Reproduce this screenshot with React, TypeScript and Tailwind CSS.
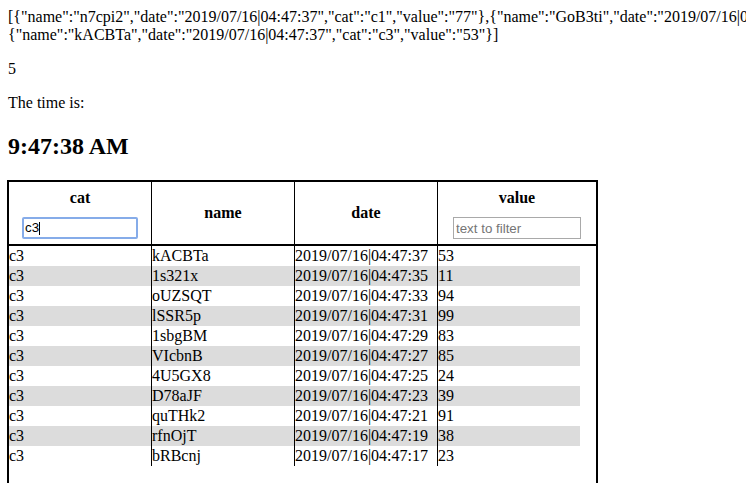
import React from "react";

type Row = {
  name: string;
  date: string;
  value: string;
};

const rows: Array<Row> = [
  { name: "kACBTa", date: "2019/07/16|04:47:37", value: "53" },
  { name: "1s321x", date: "2019/07/16|04:47:35", value: "11" },
  { name: "oUZSQT", date: "2019/07/16|04:47:33", value: "94" },
  { name: "lSSR5p", date: "2019/07/16|04:47:31", value: "99" },
  { name: "1sbgBM", date: "2019/07/16|04:47:29", value: "83" },
  { name: "VIcbnB", date: "2019/07/16|04:47:27", value: "85" },
  { name: "4U5GX8", date: "2019/07/16|04:47:25", value: "24" },
  { name: "D78aJF", date: "2019/07/16|04:47:23", value: "39" },
  { name: "quTHk2", date: "2019/07/16|04:47:21", value: "91" },
  { name: "rfnOjT", date: "2019/07/16|04:47:19", value: "38" },
  { name: "bRBcnj", date: "2019/07/16|04:47:17", value: "23" },
];

const App: React.FC = () => {
  return (
    <div className="h-[483px] w-[746px] overflow-hidden bg-white px-[8px] pt-[8px] font-['Liberation_Serif','Times_New_Roman',serif] text-[16px] leading-[18px] text-black">
      {/* raw data dump */}
      <div className="whitespace-nowrap">
        {'[{"name":"n7cpi2","date":"2019/07/16|04:47:37","cat":"c1","value":"77"},{"name":"GoB3ti","date":"2019/07/16|04:47:37","cat":"c2","value":"12"},'}
      </div>
      <div className="whitespace-nowrap">
        {'{"name":"kACBTa","date":"2019/07/16|04:47:37","cat":"c3","value":"53"}]'}
      </div>
      <p className="mt-[16px]">5</p>
      <p className="mt-[16px]">The time is:</p>
      <h2 className="mt-[20px] text-[24px] leading-[28px] font-bold">9:47:38 AM</h2>

      <div className="mt-[20px] -ml-px h-[400px] w-[591px] border-2 border-black">
        {/* header */}
        <div className="flex h-[64px] border-b-2 border-black">
          <div className="flex w-[143px] flex-col items-center border-r border-black pt-[7px]">
            <span className="font-bold">cat</span>
            <div className="relative mt-[10px] h-[22px] w-[116px] rounded-[2px] border-2 border-[#86ace9] px-[1px] font-['Liberation_Sans',Arial,sans-serif] text-[13.33px] leading-[18px]">
              c3
              <span className="absolute left-[15px] top-[3px] h-[13px] w-px bg-black" />
            </div>
          </div>
          <div className="flex w-[143px] items-center justify-center border-r border-black font-bold">
            name
          </div>
          <div className="flex w-[143px] items-center justify-center border-r border-black font-bold">
            date
          </div>
          <div className="flex flex-1 flex-col items-center pt-[7px]">
            <span className="font-bold">value</span>
            <input
              readOnly
              placeholder="text to filter"
              className="mt-[10px] h-[22px] w-[128px] border border-[#a9a9a9] px-[2px] font-['Liberation_Sans',Arial,sans-serif] text-[13.33px] outline-none placeholder:text-[#757575]"
            />
          </div>
        </div>

        {/* rows */}
        <div className="flex flex-col">
          {rows.map((row, i) => (
            <div
              key={row.name}
              className={`flex h-[20px] w-[571px] leading-[20px] ${i % 2 === 1 ? "bg-[#dcdcdc]" : ""}`}
            >
              <div className="w-[143px] border-r border-black">c3</div>
              <div className="w-[143px] border-r border-black">{row.name}</div>
              <div className="w-[143px] border-r border-black">{row.date}</div>
              <div className="w-[142px]">{row.value}</div>
            </div>
          ))}
        </div>
      </div>
    </div>
  );
};

export default App;
